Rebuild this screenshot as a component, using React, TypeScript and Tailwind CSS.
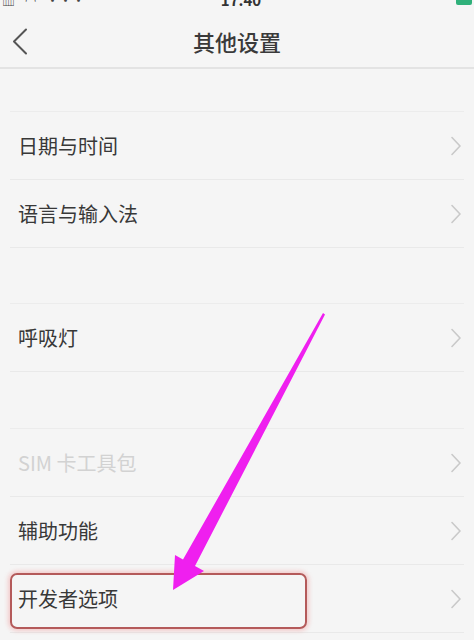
import React from "react";

const Chevron = () => (
  <svg width="12" height="20" viewBox="0 0 12 20" fill="none">
    <path d="M2 1.5 L10 10 L2 18.5" stroke="#c9c9c9" strokeWidth="1.6" strokeLinecap="round" strokeLinejoin="round" />
  </svg>
);

const Row = ({ label, disabled }: { label: string; disabled?: boolean }) => (
  <div className="mx-[10px] flex h-[68px] items-center justify-between border-b border-[#e9e9e9] pl-[8px] pr-[2px]">
    <span className={"text-[20px] leading-none " + (disabled ? "text-[#d2d2d2]" : "text-[#383838]")}>{label}</span>
    <Chevron />
  </div>
);

export default function App() {
  return (
    <div
      className="relative h-[640px] w-[474px] overflow-hidden bg-[#f5f5f5]"
      style={{ fontFamily: '"Noto Sans CJK SC", "Noto Sans", sans-serif' }}
    >
      {/* status bar (cut off at top, as in the screenshot) */}
      <div className="grid h-[10px] grid-cols-[1fr_auto_1fr] items-start overflow-hidden px-[2px]">
        <div className="-mt-[7px] flex items-center gap-[10px] text-[13px] leading-none text-[#444]">
          <span>▥</span>
          <span>◠</span>
          <span>···</span>
        </div>
        <div className="-mt-[8px] ml-[8px] text-[15px] font-semibold leading-none text-[#333]">17:40</div>
        <div className="-mt-[4px] h-[9px] w-[16px] justify-self-end rounded-[2px] bg-[#2fb07a]" />
      </div>

      {/* header */}
      <div className="relative flex h-[59px] items-center justify-center border-b-2 border-[#e3e3e3]">
        <div className="absolute left-[12px] top-[18px]">
          <svg width="16" height="27" viewBox="0 0 16 27" fill="none">
            <path d="M14 1.5 L2 13.5 L14 25.5" stroke="#555" strokeWidth="2" strokeLinecap="round" strokeLinejoin="round" />
          </svg>
        </div>
        <span className="mt-[4px] text-[22px] font-medium leading-none text-[#3a3a3a]">其他设置</span>
      </div>

      <div className="h-[42px]" />
      <div className="mx-[10px] border-t border-[#ececec]" />
      <Row label="日期与时间" />
      <Row label="语言与输入法" />

      <div className="h-[55px]" />
      <div className="mx-[10px] border-t border-[#ececec]" />
      <Row label="呼吸灯" />

      <div className="h-[56px]" />
      <div className="mx-[10px] border-t border-[#ececec]" />
      <Row label="SIM 卡工具包" disabled />
      <Row label="辅助功能" />
      <Row label="开发者选项" />

      {/* red highlight box */}
      <div className="absolute left-[10px] top-[573px] h-[56px] w-[297px] rounded-[7px] border-2 border-[#b45a5a] shadow-[0_0_4px_2px_rgba(240,150,150,0.45)]" />

      {/* magenta arrow */}
      <svg className="absolute left-0 top-0" width="474" height="640" viewBox="0 0 474 640">
        <polygon
          points="323,313 325,314.5 195,566 204,571 173,590 175,555 183,559.5"
          fill="#ef1fef"
        />
      </svg>
    </div>
  );
}
